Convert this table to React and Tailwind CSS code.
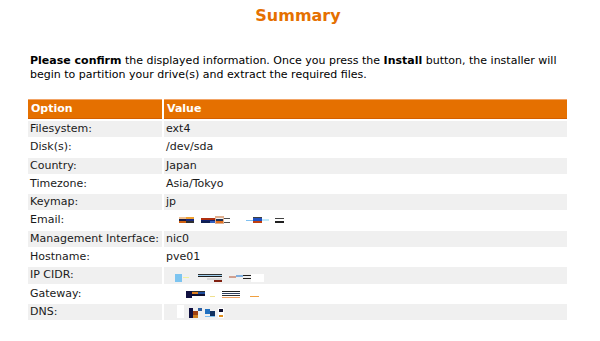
import React from "react";

const Blob = ({ rects }) => (
  <svg width="130" height="16" viewBox="0 0 130 16" className="block">
    {rects.map(([x, y, w, h, c], i) => (
      <rect key={i} x={x} y={y} width={w} height={h} fill={c} />
    ))}
  </svg>
);

const emailBlob = [
  [13, 4, 7, 2, "#f0c090"],
  [13, 6, 7, 2, "#1a1a40"],
  [13, 8, 7, 2, "#d06010"],
  [20, 4, 8, 2, "#f0a030"],
  [20, 6, 8, 2, "#1a2a80"],
  [20, 8, 8, 2, "#303030"],
  [35, 5, 14, 2, "#b03010"],
  [35, 7, 14, 1, "#102070"],
  [35, 8, 9, 2, "#102050"],
  [44, 8, 5, 2, "#3060c0"],
  [49, 3, 9, 8, "#e0b090"],
  [50, 5, 7, 1, "#f0f0f0"],
  [50, 6, 7, 2, "#203050"],
  [50, 8, 7, 2, "#e07020"],
  [58, 5, 6, 1, "#505050"],
  [58, 9, 6, 1, "#505050"],
  [80, 7, 7, 1, "#80c0f0"],
  [87, 4, 9, 1, "#404040"],
  [87, 5, 9, 3, "#2050c0"],
  [87, 8, 9, 2, "#c04010"],
  [96, 6, 7, 2, "#c0e8f8"],
  [109, 5, 9, 1, "#404040"],
  [109, 8, 9, 2, "#202020"],
];

const ipBlob = [
  [9, 6, 7, 8, "#7cc4f0"],
  [17, 9, 6, 1, "#f0f0a0"],
  [32, 6, 24, 1, "#303030"],
  [32, 7, 24, 1, "#a0d0f0"],
  [32, 8, 24, 1, "#202020"],
  [41, 10, 15, 2, "#d8d8d8"],
  [48, 12, 8, 2, "#802010"],
  [63, 8, 7, 2, "#d0a090"],
  [70, 7, 7, 2, "#80b0e0"],
  [77, 7, 8, 1, "#202020"],
  [77, 10, 8, 1, "#202020"],
  [85, 6, 13, 8, "#ffffff"],
];

const gwBlob = [
  [20, 5, 6, 7, "#101040"],
  [26, 5, 13, 1, "#303030"],
  [26, 6, 6, 2, "#e08020"],
  [32, 6, 7, 2, "#2050a0"],
  [26, 8, 13, 2, "#101030"],
  [44, 10, 5, 1, "#f0e090"],
  [56, 5, 18, 1, "#202020"],
  [56, 7, 18, 1, "#304060"],
  [56, 9, 18, 1, "#303030"],
  [56, 11, 18, 1, "#f0a060"],
  [84, 10, 9, 1, "#f0a040"],
];

const dnsBlob = [
  [11, 1, 7, 13, "#ffffff"],
  [23, 4, 4, 10, "#101040"],
  [27, 7, 5, 4, "#a04010"],
  [27, 11, 5, 3, "#d08020"],
  [32, 4, 4, 3, "#3060a0"],
  [39, 5, 5, 5, "#2070c0"],
  [44, 7, 5, 5, "#103060"],
  [39, 12, 10, 1, "#80c0f0"],
  [52, 4, 6, 10, "#ffffff"],
  [53, 5, 4, 3, "#101030"],
  [53, 11, 4, 2, "#e09020"],
];

const rows = [
  ["Filesystem:", "ext4"],
  ["Disk(s):", "/dev/sda"],
  ["Country:", "Japan"],
  ["Timezone:", "Asia/Tokyo"],
  ["Keymap:", "jp"],
  ["Email:", <Blob rects={emailBlob} />],
  ["Management Interface:", "nic0"],
  ["Hostname:", "pve01"],
  ["IP CIDR:", <Blob rects={ipBlob} />],
  ["Gateway:", <Blob rects={gwBlob} />],
  ["DNS:", <Blob rects={dnsBlob} />],
];

export default function App() {
  return (
    <div
      className="w-[600px] h-[341px] bg-white text-[#1a1a1a] overflow-hidden"
      style={{ fontFamily: '"DejaVu Sans", Verdana, sans-serif' }}
    >
      <h1 className="pt-[6px] text-center text-[16px] font-bold text-[#e57000] leading-[20px] -ml-[4px]">
        Summary
      </h1>
      <div className="mt-[28px] ml-[30px] w-[540px] text-[11px] leading-[13.5px] text-black flex flex-col">
        <p className="whitespace-nowrap">
          <b>Please confirm</b> the displayed information. Once you press the{" "}
          <b>Install</b> button, the installer will
        </p>
        <p className="whitespace-nowrap">
          begin to partition your drive(s) and extract the required files.
        </p>
      </div>
      <div className="mt-[18px] ml-[28px] grid grid-cols-[134px_403px] gap-[2px] text-[11px]">
        <div className="h-[20px] bg-[#e57000] border-t border-t-[#f2a466] border-b border-b-[#d45f00] pl-[3px] flex items-center font-bold text-white">
          Option
        </div>
        <div className="h-[20px] bg-[#e57000] border-t border-t-[#f2a466] border-b border-b-[#d45f00] pl-[3px] flex items-center font-bold text-white">
          Value
        </div>
        {rows.map(([k, v], i) => {
          const bg = i % 2 === 0 ? "bg-[#f0f0f0]" : "bg-white";
          return (
            <React.Fragment key={k}>
              <div className={`h-[16.3px] ${bg} pl-[2px] flex items-center`}>
                {k}
              </div>
              <div className={`h-[16.3px] ${bg} pl-[2px] flex items-center`}>
                {v}
              </div>
            </React.Fragment>
          );
        })}
      </div>
    </div>
  );
}
